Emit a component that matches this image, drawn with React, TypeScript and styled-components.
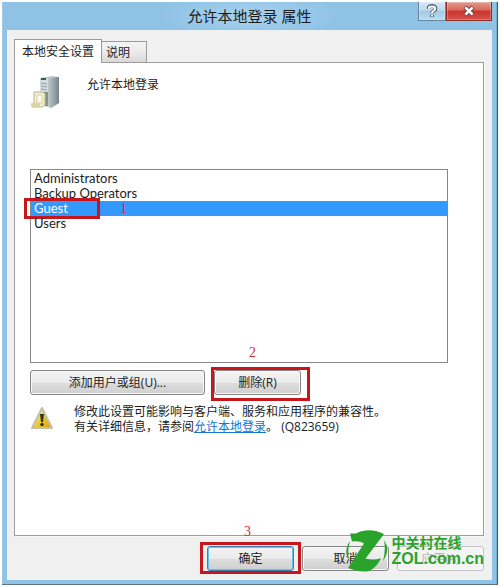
import React, { useState } from "react";
import styled, { createGlobalStyle, css } from "styled-components";

const GlobalStyle = createGlobalStyle`
  *, *::before, *::after { box-sizing: border-box; }
  body {
    margin: 0;
    background: #fff;
    color: #1c1c1c;
    font: 12px/15px "Open Sans", "Noto Sans CJK SC", sans-serif;
  }
  button { font: inherit; color: inherit; }
`;

const Page = styled.main`
  display: flex;
  min-height: 100vh;
  padding: 2px;
`;

const Dialog = styled.section`
  flex: 1;
  display: flex;
  flex-direction: column;
  padding: 0 5px 4px;
  border-right: 1px solid #3f5870;
  border-bottom: 1px solid #5f7486;
  background: #8fc3e6;
  box-shadow: inset 1px 0 #a5c9e2, inset -1px 0 #79add3;
`;

const TitleBar = styled.header`
  position: relative;
  display: flex;
  justify-content: center;
  height: 28px;
  background: radial-gradient(ellipse 90px 22px at 50% 50%, #a9d2ec, #8fc3e6);
`;

const Title = styled.h1`
  margin: 0;
  font-size: 15px;
  line-height: 28px;
  font-weight: 400;
`;

const WindowControls = styled.div`
  position: absolute;
  top: 0;
  right: 0;
  display: flex;
`;

const WindowButton = styled.button<{ $close?: boolean }>`
  display: grid;
  place-items: center;
  width: ${(p) => (p.$close ? 46 : 28)}px;
  height: 19px;
  padding: 0;
  border: 1px solid ${(p) => (p.$close ? "#8e2b26" : "#66869f")};
  border-top: 0;
  background: ${(p) =>
    p.$close
      ? "linear-gradient(#e39c90, #d9685c 45%, #c9362d 50%, #d6504a)"
      : "linear-gradient(#d5e8f5, #bedaed 45%, #a5c9e3 50%, #b8dbf0)"};
  box-shadow: inset 0 0 0 1px rgba(255, 255, 255, 0.25);
`;

const Client = styled.div`
  flex: 1;
  display: flex;
  flex-direction: column;
  padding: 9px 8px 9px 7px;
  background: #f0f0f0;
`;

const Tabs = styled.div`
  display: flex;
  align-items: flex-end;
`;

const Tab = styled.button<{ $active: boolean }>`
  padding: 0 7px;
  border: 1px solid #9b9b9b;
  border-bottom: 0;
  ${(p) =>
    p.$active
      ? css`
          z-index: 1;
          height: 24px;
          margin-bottom: -1px;
          background: #fff;
        `
      : css`
          height: 21px;
          padding: 0 16px 0 4px;
          border-left: 0;
          background: linear-gradient(#f3f3f3, #ebebeb 50%, #d8d8d8);
        `}
`;

const Panel = styled.section`
  flex: 1;
  display: flex;
  flex-direction: column;
  padding: 12px 35px 12px 15px;
  border: 1px solid #a19c9c;
  background: #fff;
  box-shadow: 1px 1px #fafafa;
`;

const Policy = styled.div`
  display: flex;
  gap: 25px;
  height: 94px;
`;

const PolicyName = styled.h2`
  margin: 2px 0 0;
  font-size: 12px;
  line-height: 15px;
  font-weight: 400;
`;

const AccountList = styled.ul`
  height: 194px;
  margin: 0;
  padding: 1px 0;
  border: 1px solid #85898d;
  list-style: none;
  font: 13px/15px Lato, "Noto Sans CJK SC", sans-serif;
`;

const Account = styled.li<{ $selected: boolean }>`
  position: relative;
  height: 15px;
  padding-left: 3px;
  color: ${(p) => (p.$selected ? "#fff" : "#1c1c1c")};
  background: ${(p) => (p.$selected ? "#3399ff" : "transparent")};
  cursor: default;
`;

const Actions = styled.div`
  display: flex;
  gap: 9px;
  margin-top: 7px;
`;

const PushButton = styled.button<{ $wide?: boolean; $primary?: boolean }>`
  width: ${(p) => (p.$wide ? 175 : 87)}px;
  height: 25px;
  padding: 0;
  border: 1px solid ${(p) => (p.$primary ? "#3c7fb1" : "#858585")};
  border-radius: 3px;
  background: linear-gradient(#f3f3f3, #ebebeb 50%, #dddddd 52%, #cfcfcf);
  box-shadow: inset 0 0 0 1px ${(p) => (p.$primary ? "#65c3eb" : "#f8f8f8")};
  &:disabled {
    color: #b4b4b4;
    border-color: #c3c3c3;
    background: #f4f4f4;
  }
`;

const Marked = styled.div`
  position: relative;
  display: flex;
`;

const Highlight = styled.span<{ $area: "row" | "remove" | "confirm" }>`
  position: absolute;
  border: 3px solid #c8161d;
  pointer-events: none;
  ${(p) =>
    ({
      row: "left: -7px; top: -3px; width: 76px; height: 21px;",
      remove: "inset: -3px -9px -6px -3px;",
      confirm: "inset: -4px -7px -3px -7px;",
    })[p.$area]}
`;

const StepNumber = styled.span<{ $area: "row" | "remove" | "confirm" }>`
  position: absolute;
  color: #d22c34;
  font: 14px/14px "Liberation Serif", serif;
  pointer-events: none;
  ${(p) =>
    ({
      row: "left: 89px; top: 1px;",
      remove: "left: 35px; top: -24px;",
      confirm: "left: 37px; top: -21px;",
    })[p.$area]}
`;

const Notice = styled.div`
  display: flex;
  gap: 20px;
  margin-top: 9px;
`;

const NoticeText = styled.p`
  margin: 0;
`;

const Link = styled.a`
  color: #1673cf;
`;

const Footer = styled.footer`
  position: relative;
  display: flex;
  justify-content: flex-end;
  gap: 8px;
  margin-top: 10px;
`;

const Watermark = styled.div`
  position: absolute;
  right: 0;
  top: -17px;
  display: flex;
  gap: 4px;
  color: #2aa32b;
  pointer-events: none;
`;

const WatermarkText = styled.div`
  padding-top: 5px;
  font: 700 14px/16px "Noto Sans CJK SC", sans-serif;
`;

const WatermarkDomain = styled.div`
  font: 700 16px/18px "Liberation Sans", sans-serif;
`;

function HelpIcon() {
  return (
    <svg width="12" height="14" viewBox="0 0 12 14" fill="none" aria-hidden="true">
      <path d="M2.5 4.8C2.5 1 9.5 1 9.5 4.8C9.5 7 6 6.8 6 9M6 10.5v2.5" stroke="#53636f" strokeWidth="3.8" />
      <path d="M2.8 4.8C2.8 1.8 9.2 1.8 9.2 4.8C9.2 6.7 6 6.8 6 9M6 10.7v1.9" stroke="#fff" strokeWidth="2" />
    </svg>
  );
}

function CloseIcon() {
  return (
    <svg width="14" height="12" viewBox="0 0 14 12" fill="none" aria-hidden="true">
      <path d="M3 2l8 8M11 2L3 10" stroke="#713e40" strokeWidth="4.4" />
      <path d="M3.4 2.4l7.2 7.2M10.6 2.4L3.4 9.6" stroke="#fff" strokeWidth="2.6" />
    </svg>
  );
}

function ServerIcon() {
  return (
    <svg width="32" height="34" viewBox="0 0 32 34" aria-hidden="true">
      <defs>
        <linearGradient id="tower" x2="1">
          <stop stopColor="#c0cacd" />
          <stop offset="1" stopColor="#76848a" />
        </linearGradient>
      </defs>
      <path d="M10 3l12-2 7 1v26l-7 5-12-3z" fill="#c3ccd0" />
      <path d="M18 3l11-1v26l-9 5-2-4z" fill="url(#tower)" />
      <path d="M10 3l8 1v28l-8-3z" fill="#d5dde0" />
      <path d="M11 4h5" stroke="#41565c" strokeWidth="2" />
      <path d="M11 8l6 1M11 11l6 1M11 14l6 1" stroke="#8fa0a6" />
      <path d="M14 17h4v14h-4z" fill="#83957f" />
      <path d="M4 17h9l2 2v11l-3 2H2v-3h2z" fill="#f1edd2" stroke="#bdb792" />
      <path d="M7 20h5v8H7z" fill="#fffdec" stroke="#d9d0a4" />
      <path d="M1 28h9v4H2z" fill="#ddd4a4" />
    </svg>
  );
}

function WarningIcon() {
  return (
    <svg width="24" height="26" viewBox="0 0 24 26" aria-hidden="true">
      <defs>
        <linearGradient id="warning" x2="1" y2="1">
          <stop stopColor="#fff49a" />
          <stop offset=".45" stopColor="#f0d43c" />
          <stop offset="1" stopColor="#d99a12" />
        </linearGradient>
      </defs>
      <path d="M12 4L22 24H2z" fill="url(#warning)" stroke="#c2c0ae" strokeWidth="2" strokeLinejoin="round" />
      <path d="M10 10h4l-1 8h-2z" fill="#33321b" />
      <circle cx="12" cy="20.5" r="1.7" fill="#33321b" />
    </svg>
  );
}

function ZolMark() {
  return (
    <svg width="42" height="44" viewBox="0 0 42 44" fill="currentColor" aria-hidden="true">
      <path d="M4 4.5L10 4.5C18 0 29 0 38 5L19.5 29.5C24 31 30 31 35 29C32 36 27 41 21 42.5C14 43 7 41 2 39L18 14.5C15 12.5 11 12 6 12.5Z" />
      <path d="M4 12Q-3 22 3 32Q1 22 4 12ZM38 11Q45 21 37 32Q40 21 38 11Z" />
    </svg>
  );
}

const accounts = ["Administrators", "Backup Operators", "Guest", "Users"];
const tabs = ["本地安全设置", "说明"];

export default function App() {
  const [selected, setSelected] = useState("Guest");
  const [activeTab, setActiveTab] = useState(tabs[0]);

  return (
    <Page>
      <GlobalStyle />
      <Dialog role="dialog" aria-labelledby="dialog-title">
        <TitleBar>
          <Title id="dialog-title">允许本地登录 属性</Title>
          <WindowControls>
            <WindowButton aria-label="帮助"><HelpIcon /></WindowButton>
            <WindowButton $close aria-label="关闭"><CloseIcon /></WindowButton>
          </WindowControls>
        </TitleBar>
        <Client>
          <Tabs role="tablist">
            {tabs.map((tab) => (
              <Tab
                key={tab}
                role="tab"
                aria-selected={tab === activeTab}
                $active={tab === activeTab}
                onClick={() => setActiveTab(tab)}
              >
                {tab}
              </Tab>
            ))}
          </Tabs>
          <Panel role="tabpanel">
            <Policy>
              <ServerIcon />
              <PolicyName>允许本地登录</PolicyName>
            </Policy>
            <AccountList role="listbox" aria-label="允许本地登录" tabIndex={0}>
              {accounts.map((account) => (
                <Account
                  key={account}
                  role="option"
                  aria-selected={account === selected}
                  $selected={account === selected}
                  onClick={() => setSelected(account)}
                >
                  {account}
                  {account === "Guest" && (
                    <>
                      <Highlight $area="row" />
                      <StepNumber $area="row">1</StepNumber>
                    </>
                  )}
                </Account>
              ))}
            </AccountList>
            <Actions>
              <PushButton $wide>添加用户或组(U)...</PushButton>
              <Marked>
                <PushButton>删除(R)</PushButton>
                <Highlight $area="remove" />
                <StepNumber $area="remove">2</StepNumber>
              </Marked>
            </Actions>
            <Notice>
              <WarningIcon />
              <NoticeText>
                修改此设置可能影响与客户端、服务和应用程序的兼容性。
                <br />
                有关详细信息，请参阅<Link href="#policy">允许本地登录</Link>。 (Q823659)
              </NoticeText>
            </Notice>
          </Panel>
          <Footer>
            <Marked>
              <PushButton $primary>确定</PushButton>
              <Highlight $area="confirm" />
              <StepNumber $area="confirm">3</StepNumber>
            </Marked>
            <PushButton>取消</PushButton>
            <PushButton disabled>应用(A)</PushButton>
            <Watermark>
              <ZolMark />
              <WatermarkText>
                中关村在线
                <WatermarkDomain>ZOL.com.cn</WatermarkDomain>
              </WatermarkText>
            </Watermark>
          </Footer>
        </Client>
      </Dialog>
    </Page>
  );
}
